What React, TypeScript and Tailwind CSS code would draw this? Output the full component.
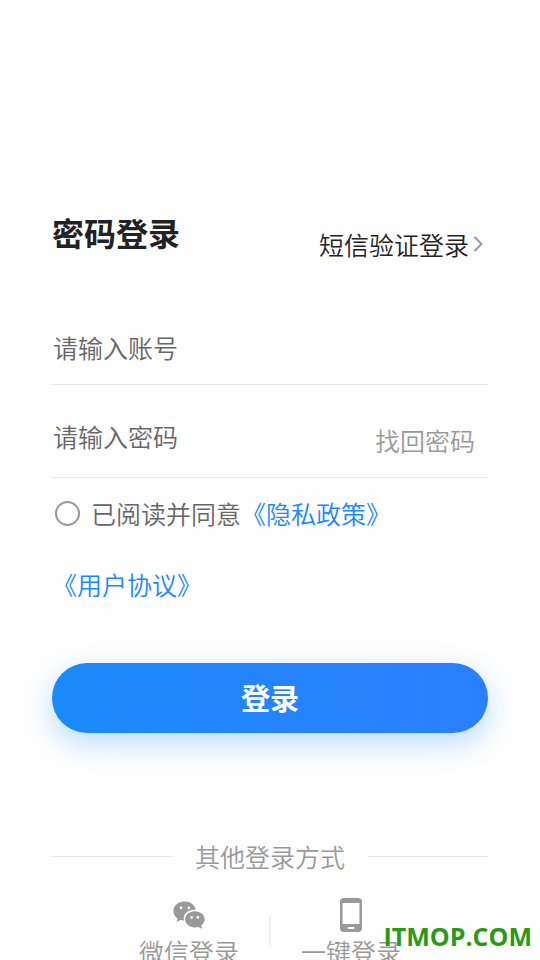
import { useState } from 'react'
import type { FormEvent } from 'react'

function WechatIcon() {
  return (
    <svg viewBox="0 0 32 28" className="h-7 w-8" fill="#999999" aria-hidden="true">
      <path
        fillRule="evenodd"
        d="M11.6.6C5.400.6.4 4.800.4 10.100c0 3 1.600 5.700 4.200 7.400L3.500 21l4-2.100c1.100.3 2.300.5 3.500.5-.2-.7-.3-1.400-.3-2.100 0-4.800 4.700-8.500 10.300-8.500h1.800C21.800 4.100 17.200.6 11.600.6ZM8 5.400a1.400 1.400 0 1 1 0 2.800 1.400 1.400 0 0 1 0-2.800Zm7.800 0a1.400 1.400 0 1 1 0 2.800 1.400 1.400 0 0 1 0-2.800Z"
      />
      <path
        fillRule="evenodd"
        d="M21.900 10.200c-5.500 0-9.800 3.600-9.800 8.100s4.300 8.100 9.800 8.100c1.100 0 2.200-.2 3.200-.5l4 1.900-.9-3.200c2-1.500 3.500-3.700 3.500-6.300 0-4.500-4.300-8.100-9.800-8.100Zm-3.300 4.800a1.400 1.400 0 1 1 0 2.800 1.400 1.400 0 0 1 0-2.800Zm6.200 0a1.400 1.400 0 1 1 0 2.800 1.400 1.400 0 0 1 0-2.800Z"
      />
    </svg>
  )
}

function PhoneIcon() {
  return (
    <svg viewBox="0 0 22 34" className="h-[34px] w-[22px]" aria-hidden="true">
      <rect width="22" height="34" rx="4" fill="#999999" />
      <rect x="2.500" y="5" width="17" height="21" fill="#fefefe" />
      <rect x="7.500" y="29" width="7" height="2" rx="1" fill="#fefefe" />
    </svg>
  )
}

export default function App() {
  const [account, setAccount] = useState('')
  const [password, setPassword] = useState('')
  const [agreed, setAgreed] = useState(false)

  function handleSubmit(e: FormEvent) {
    e.preventDefault()
  }

  return (
    <div className="relative h-screen overflow-hidden bg-[#fefefe] px-[52px] pt-[208px] font-['Noto_Sans_CJK_SC',sans-serif] text-[25px] font-[350] text-[#222222]">
      <header className="flex items-end justify-between pr-[5px]">
        <h1 className="text-[32px] leading-[48px] font-bold">密码登录</h1>
        <a href="#sms" className="flex items-center gap-1 leading-6">
          短信验证登录
          <svg viewBox="0 0 10 16" className="h-4 w-[10px]" fill="none" stroke="#999999" strokeWidth="2" aria-hidden="true">
            <path d="M1.500 1 8.500 8l-7 7" />
          </svg>
        </a>
      </header>

      <form onSubmit={handleSubmit}>
        <div className="mt-[67px] border-b border-[#e8e8e8] pb-[13px]">
          <input
            type="text"
            aria-label="账号"
            value={account}
            onChange={e => setAccount(e.target.value)}
            placeholder="请输入账号"
            className="h-12 w-full bg-transparent pl-px outline-none placeholder:text-[#666666]"
          />
        </div>
        <div className="flex items-end border-b border-[#e8e8e8] pt-[27px] pr-[13px] pb-[17px]">
          <input
            type="password"
            aria-label="密码"
            value={password}
            onChange={e => setPassword(e.target.value)}
            placeholder="请输入密码"
            className="h-12 min-w-0 flex-1 bg-transparent pl-px outline-none placeholder:text-[#666666]"
          />
          <a href="#reset" className="leading-10 text-[#999999]">找回密码</a>
        </div>

        <div className="leading-[71px] text-[#1a89fa]">
          <label className="inline-flex items-center gap-[11px] pl-[3px] align-top text-[#666666]">
            <input
              type="checkbox"
              checked={agreed}
              onChange={e => setAgreed(e.target.checked)}
              className="size-[25px] appearance-none rounded-full border-2 border-[#999999] checked:bg-[#1a89fa]"
            />
            已阅读并同意
          </label>
          <a href="#privacy">《隐私政策》</a>
          <br />
          <a href="#terms">《用户协议》</a>
        </div>

        <button
          type="submit"
          className="mt-[43px] h-[70px] w-full rounded-full bg-linear-to-r from-[#1a89fa] to-[#2b7fff] text-[29px] font-bold text-white shadow-[0_10px_30px_rgba(26,137,250,0.3)]"
        >
          登录
        </button>
      </form>

      <div className="mt-[103px] flex items-center gap-[23px] leading-10 text-[#999999]">
        <span className="h-px flex-1 bg-[#e8e8e8]" />
        其他登录方式
        <span className="h-px flex-1 bg-[#e8e8e8]" />
      </div>

      <div className="mt-[19px] flex items-center justify-center text-[#999999]">
        <button type="button" className="flex w-[162px] flex-col items-center">
          <span className="flex h-10 items-center"><WechatIcon /></span>
          <span className="leading-8">微信登录</span>
        </button>
        <span className="-mx-px h-7 w-[2px] bg-[#eeeeee]" />
        <button type="button" className="flex w-[162px] flex-col items-center">
          <span className="flex h-10 items-center"><PhoneIcon /></span>
          <span className="leading-8">一键登录</span>
        </button>
      </div>

      <div className="absolute right-2 bottom-2 font-['Open_Sans',sans-serif] text-[25px] leading-8 font-bold text-[#2a9a16]">
        ITMOP.COM
      </div>
    </div>
  )
}
